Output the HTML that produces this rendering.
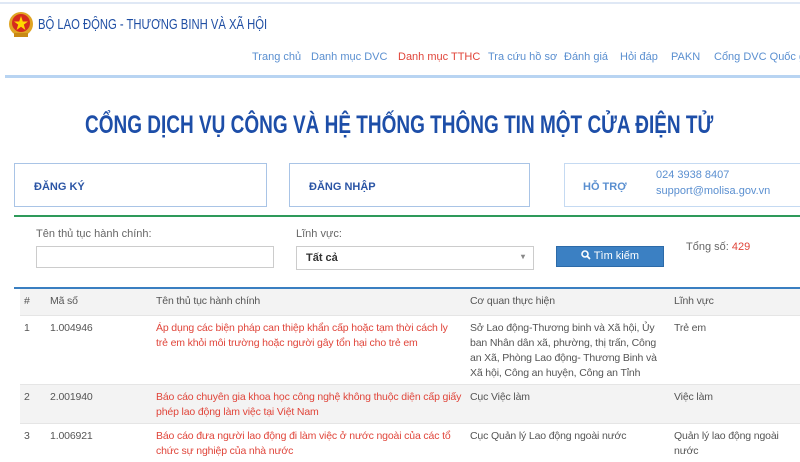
<!DOCTYPE html>
<html><head><meta charset="utf-8"><style>
*{margin:0;padding:0;box-sizing:border-box}
body{width:800px;height:450px;overflow:hidden;background:#fff;font-family:"Liberation Sans",sans-serif;position:relative;color:#444}
.a{position:absolute;white-space:nowrap}
.nav{position:absolute;top:51px;font-size:11px;color:#5a8fd0;white-space:nowrap}
.card{position:absolute;border:1.5px solid #a9c4e6;height:44px}
.card b{position:absolute;font-size:11px;color:#2b55a5;top:17px}
table.a{white-space:normal;table-layout:fixed}
td,th{white-space:normal;font-size:10.5px;letter-spacing:-.15px;vertical-align:top;padding:5px 4px 3px;font-weight:normal;text-align:left;line-height:15px;color:#555}
th{padding:5px 4px}
td.r{color:#e0453a}
</style></head><body>
<div class="a" style="left:0;top:2px;width:800px;height:2px;background:#dfe8f5"></div>
<svg class="a" style="left:6px;top:11px" width="30" height="28" viewBox="0 0 30 28"><circle cx="15" cy="13" r="12" fill="#e0a423"/><circle cx="15" cy="12" r="9" fill="#d52b1e"/><polygon points="15,5 16.8,10.5 22,10.5 17.8,13.6 19.4,19 15,15.7 10.6,19 12.2,13.6 8,10.5 13.2,10.5" fill="#ffd800"/><rect x="8" y="22" width="14" height="4" fill="#c98a14"/></svg>
<div class="a" style="left:38px;top:16px;font-size:15px;color:#1f4ea3;transform:scaleX(.75);transform-origin:left">BỘ LAO ĐỘNG - THƯƠNG BINH VÀ XÃ HỘI</div>
<div class="nav" style="left:252px">Trang chủ</div>
<div class="nav" style="left:311px">Danh mục DVC</div>
<div class="nav" style="left:398px;color:#e0453a">Danh mục TTHC</div>
<div class="nav" style="left:488px">Tra cứu hồ sơ</div>
<div class="nav" style="left:564px">Đánh giá</div>
<div class="nav" style="left:620px">Hỏi đáp</div>
<div class="nav" style="left:671px">PAKN</div>
<div class="nav" style="left:714px">Cổng DVC Quốc gia</div>
<div class="a" style="left:5px;top:75px;width:795px;height:3px;background:#b8d4f2"></div>
<div class="a" style="left:85px;top:111px;font-size:25px;font-weight:bold;color:#1d4ea8;transform:scaleX(.76);transform-origin:left">CỔNG DỊCH VỤ CÔNG VÀ HỆ THỐNG THÔNG TIN MỘT CỬA ĐIỆN TỬ</div>
<div class="card" style="left:14px;top:163px;width:253px"><b style="left:19px">ĐĂNG KÝ</b></div>
<div class="card" style="left:289px;top:163px;width:241px"><b style="left:19px">ĐĂNG NHẬP</b></div>
<div class="card" style="left:564px;top:163px;width:240px;border-color:#c5daf2"><b style="left:18px;color:#5a8fd0">HỖ TRỢ</b><b style="left:91px;top:5px;color:#5a8fd0;font-weight:normal">024 3938 8407</b><b style="left:91px;top:21px;color:#5a8fd0;font-weight:normal">support@molisa.gov.vn</b></div>
<div class="a" style="left:14px;top:215px;width:786px;height:2px;background:#2e9a5a"></div>
<div class="a" style="left:36px;top:228px;font-size:11px;color:#666">Tên thủ tục hành chính:</div>
<div class="a" style="left:36px;top:246px;width:238px;height:22px;border:1px solid #ccc"></div>
<div class="a" style="left:296px;top:228px;font-size:11px;color:#666">Lĩnh vực:</div>
<div class="a" style="left:296px;top:246px;width:238px;height:24px;border:1px solid #ccc;font-size:11px;font-weight:bold;color:#333;padding:5px 9px">Tất cả<span style="position:absolute;right:8px;top:5px;font-size:8px;color:#888">▾</span></div>
<div class="a" style="left:556px;top:246px;width:108px;height:21px;background:#3b80c3;border:1px solid #2c6aa8;color:#fff;font-size:11px;text-align:center;line-height:19px"><svg width="10" height="10" viewBox="0 0 10 10" style="vertical-align:-1px"><circle cx="4" cy="4" r="3" fill="none" stroke="#fff" stroke-width="1.6"/><path d="M6 6L9 9" stroke="#fff" stroke-width="1.8"/></svg> Tìm kiếm</div>
<div class="a" style="left:686px;top:241px;font-size:11px;color:#666">Tổng số: <span style="color:#e0453a">429</span></div>
<div class="a" style="left:14px;top:287px;width:786px;height:2px;background:#3a7fc1"></div>
<table class="a" style="left:20px;top:289px;width:780px;border-collapse:collapse">
<colgroup><col style="width:26px"><col style="width:106px"><col style="width:314px"><col style="width:204px"><col></colgroup>
<tr style="background:#f3f3f3;height:26px"><th>#</th><th>Mã số</th><th>Tên thủ tục hành chính</th><th>Cơ quan thực hiện</th><th>Lĩnh vực</th></tr>
<tr style="border-top:1px solid #e5e5e5"><td>1</td><td>1.004946</td><td class="r">Áp dụng các biện pháp can thiệp khẩn cấp hoặc tạm thời cách ly trẻ em khỏi môi trường hoặc người gây tổn hại cho trẻ em</td><td>Sở Lao động-Thương binh và Xã hội, Ủy ban Nhân dân xã, phường, thị trấn, Công an Xã, Phòng Lao động- Thương Binh và Xã hội, Công an huyện, Công an Tỉnh</td><td>Trẻ em</td></tr>
<tr style="background:#f3f3f3;border-top:1px solid #e5e5e5"><td>2</td><td>2.001940</td><td class="r">Báo cáo chuyên gia khoa học công nghệ không thuộc diện cấp giấy phép lao động làm việc tại Việt Nam</td><td>Cục Việc làm</td><td>Việc làm</td></tr>
<tr style="border-top:1px solid #e5e5e5"><td>3</td><td>1.006921</td><td class="r">Báo cáo đưa người lao động đi làm việc ở nước ngoài của các tổ chức sự nghiệp của nhà nước</td><td>Cục Quản lý Lao động ngoài nước</td><td>Quản lý lao động ngoài nước</td></tr>
</table>
</body></html>
